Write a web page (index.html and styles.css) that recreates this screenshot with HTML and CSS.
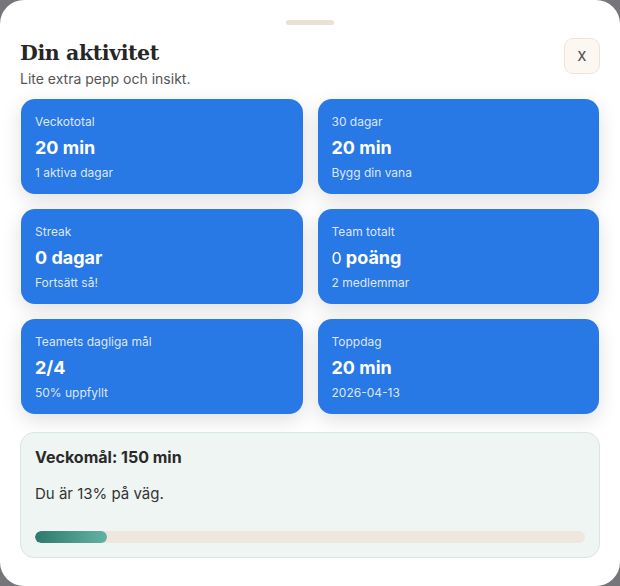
FILE: index.html
```html
<!DOCTYPE html>
<html lang="sv">
<head>
<meta charset="utf-8">
<title>Din aktivitet</title>
<link rel="stylesheet" href="styles.css">
</head>
<body>
<div class="sheet">
  <div class="handle"></div>
  <header class="head">
    <div class="head-text">
      <h1 class="title">Din aktivitet</h1>
      <p class="subtitle">Lite extra pepp och insikt.</p>
    </div>
    <button class="close" type="button">x</button>
  </header>
  <div class="grid">
    <div class="card">
      <div class="card-label">Veckototal</div>
      <div class="card-value">20 min</div>
      <div class="card-sub">1 aktiva dagar</div>
    </div>
    <div class="card">
      <div class="card-label">30 dagar</div>
      <div class="card-value">20 min</div>
      <div class="card-sub">Bygg din vana</div>
    </div>
    <div class="card">
      <div class="card-label">Streak</div>
      <div class="card-value">0 dagar</div>
      <div class="card-sub">Fortsätt så!</div>
    </div>
    <div class="card">
      <div class="card-label">Team totalt</div>
      <div class="card-value"><span class="num-light">0</span> poäng</div>
      <div class="card-sub">2 medlemmar</div>
    </div>
    <div class="card">
      <div class="card-label">Teamets dagliga mål</div>
      <div class="card-value">2/4</div>
      <div class="card-sub">50% uppfyllt</div>
    </div>
    <div class="card">
      <div class="card-label">Toppdag</div>
      <div class="card-value">20 min</div>
      <div class="card-sub">2026-04-13</div>
    </div>
  </div>
  <section class="goal">
    <div class="goal-title">Veckomål: 150 min</div>
    <div class="goal-text">Du är 13% på väg.</div>
    <div class="bar"><div class="bar-fill" style="width: 13%"></div></div>
  </section>
</div>
</body>
</html>
```
FILE: styles.css
```css
* { box-sizing: border-box; }
html, body { margin: 0; padding: 0; }
body {
  background: #76767a;
  font-family: "Inter", "Noto Sans", sans-serif;
  color: #2a2a2a;
  width: 620px;
  height: 586px;
  overflow: hidden;
}
.sheet {
  width: 620px;
  height: 586px;
  background: #ffffff;
  border-radius: 24px;
  padding: 20px 20px;
  display: flex;
  flex-direction: column;
}
.handle {
  width: 48px;
  height: 5px;
  border-radius: 3px;
  background: #e9e0d6;
  margin: 0 auto;
}
.head {
  display: flex;
  justify-content: space-between;
  align-items: flex-start;
  margin-top: 13px;
}
.title {
  margin: 0;
  font-family: "DejaVu Serif", "Liberation Serif", serif;
  font-weight: 700;
  font-size: 20.5px;
  line-height: 30px;
  letter-spacing: -0.4px;
  color: #262626;
}
.subtitle {
  margin: 2px 0 0;
  font-size: 14px;
  line-height: 18px;
  color: #555555;
}
.close {
  width: 36px;
  height: 36px;
  margin-top: 0;
  border-radius: 9px;
  border: 1px solid #f0e3d6;
  background: #fdf7f2;
  color: #555555;
  font-family: "Inter", sans-serif;
  font-size: 17px;
  line-height: 1;
  padding: 0 0 2px;
}
.grid {
  margin-top: 11px;
  display: grid;
  grid-template-columns: 1fr 1fr;
  gap: 15px;
  padding: 0 1px;
}
.card {
  background: #2878e5;
  border-radius: 14px;
  height: 95px;
  padding: 15px 14px 13px;
  color: #ffffff;
  box-shadow: 0 6px 20px rgba(0, 0, 0, 0.13);
  display: flex;
  flex-direction: column;
}
.card-label {
  font-size: 12px;
  line-height: 16px;
  color: rgba(255, 255, 255, 0.85);
}
.card-value {
  margin-top: 6px;
  font-size: 18px;
  font-weight: 700;
  line-height: 24px;
}
.num-light {
  font-weight: 400;
  font-size: 16px;
}
.card-sub {
  margin-top: 5px;
  font-size: 12px;
  line-height: 16px;
  color: rgba(255, 255, 255, 0.85);
}
.goal {
  margin-top: 18px;
  background: #eef5f3;
  border: 1px solid #d7e8e3;
  border-radius: 14px;
  padding: 13px 14px 14px;
}
.goal-title {
  font-size: 16px;
  font-weight: 700;
  line-height: 22px;
  color: #2a2a2a;
}
.goal-text {
  margin-top: 15px;
  font-size: 15px;
  line-height: 22px;
  color: #333333;
}
.bar {
  margin-top: 26px;
  height: 12px;
  border-radius: 6px;
  background: #efe7de;
  overflow: hidden;
}
.bar-fill {
  height: 100%;
  border-radius: 6px;
  background: linear-gradient(90deg, #2e7a6d, #62b2a3);
}
```
